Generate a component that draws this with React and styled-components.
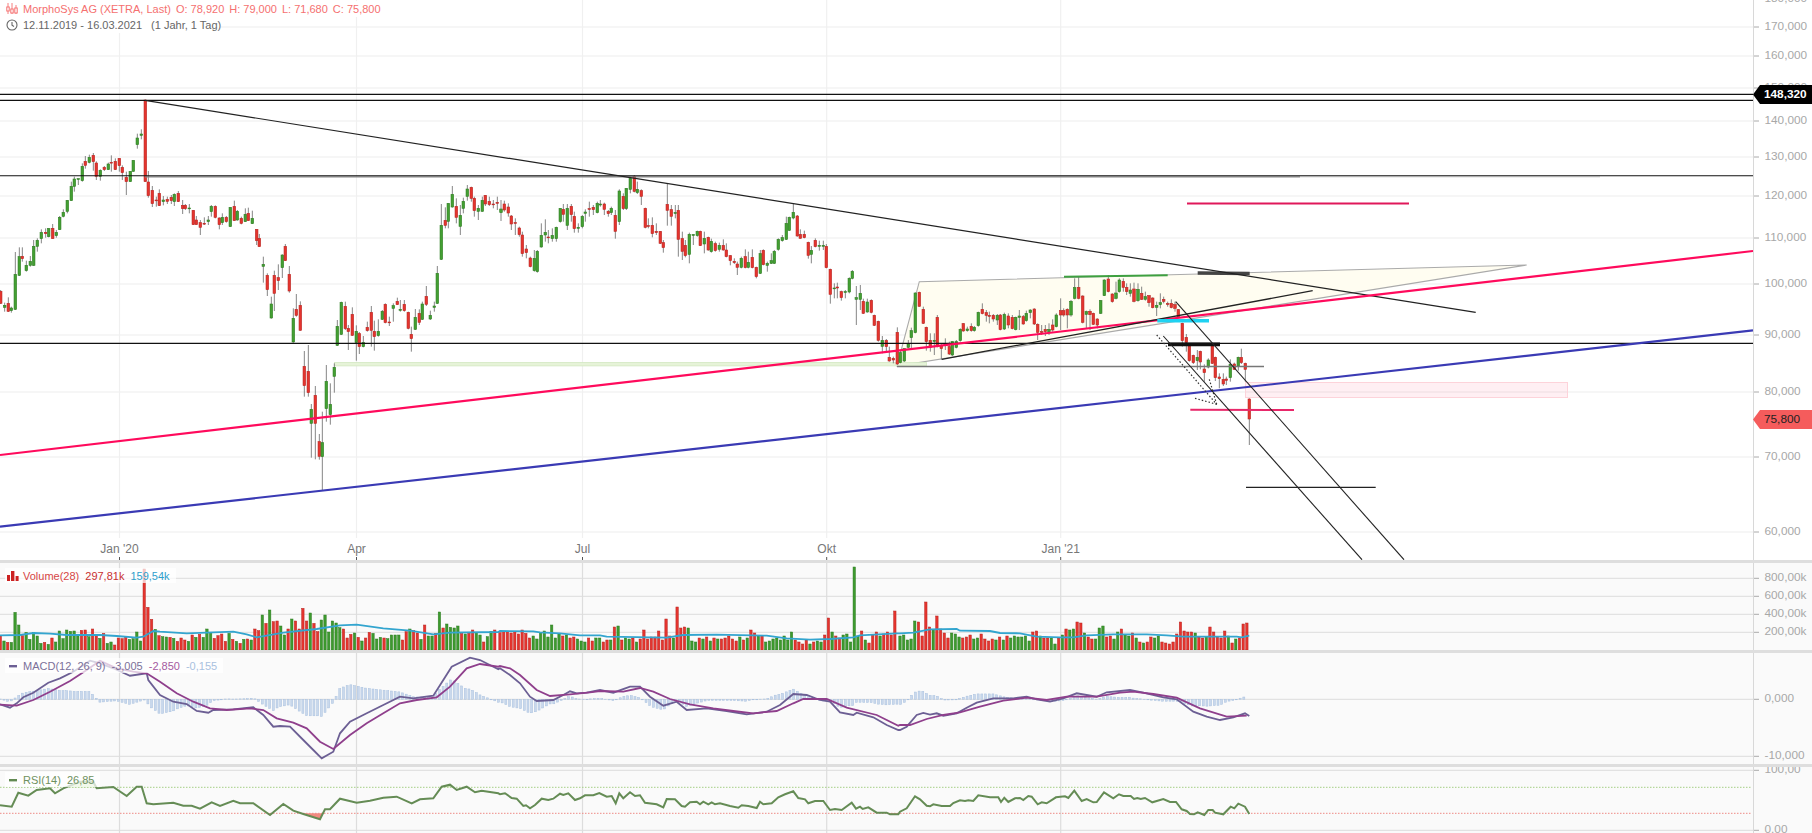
import React from 'react';
import styled, { createGlobalStyle } from 'styled-components';

const GlobalStyle = createGlobalStyle`
  html, body { margin: 0; padding: 0; background: #fff; overflow: hidden; }
  body { font-family: "Liberation Sans", Arial, sans-serif; }
`;

/* START: CSS in JS */

const Page = styled.div`
  width: 1812px;
  height: 833px;
  display: flex;
  flex-direction: column;
`;

const Pane = styled.section`
  position: relative;
  display: flex;
  height: ${(p) => p.$height}px;
  background: ${(p) => p.$bg};
  overflow: hidden;
`;

const Divider = styled.div`
  height: 3px;
  background: #dedede;
`;

const PlotSvg = styled.svg`
  display: block;
  width: 1753px;
  height: 100%;
  flex: none;
  text {
    font-size: 12px;
    fill: #777;
    text-anchor: middle;
  }
`;

const AxisSvg = styled.svg`
  display: block;
  flex: 1;
  height: 100%;
  border-left: 1px solid #d8d8d8;
  text {
    font-size: 11.8px;
    fill: #a8a8a8;
  }
`;

const PriceTag = styled.div`
  position: absolute;
  top: ${(p) => p.$top}px;
  left: 1753px;
  width: 59px;
  height: 19px;
  box-sizing: border-box;
  padding-left: 11px;
  font-size: 11.8px;
  line-height: 18px;
  font-weight: ${(p) => (p.$strong ? 700 : 400)};
  color: ${(p) => p.$fg};
  background: ${(p) => p.$bg};
  clip-path: polygon(0 50%, 7px 0, 100% 0, 100% 100%, 7px 100%);
`;

const TitleBlock = styled.div`
  position: absolute;
  top: 1px;
  left: 0;
  display: flex;
  flex-direction: column;
  align-items: flex-start;
`;

const TitleRow = styled.div`
  display: flex;
  align-items: center;
  height: 16px;
  padding: 0 0 0 6px;
  background: #fff;
  font-size: 11px;
  color: ${(p) => p.$color};
  white-space: nowrap;
  span + span { margin-left: ${(p) => p.$gap}px; }
  svg { margin-right: 5px; flex: none; }
`;

const StudyLegend = styled.div`
  position: absolute;
  top: 5px;
  left: 5px;
  display: flex;
  align-items: center;
  height: 15px;
  padding: 0 6px 0 2px;
  background: rgba(255, 255, 255, 0.72);
  font-size: 11px;
  white-space: nowrap;
  svg { margin-right: 4px; flex: none; }
`;

const LegendValue = styled.span`
  color: ${(p) => p.$color};
  margin-right: 6px;
  &:last-child { margin-right: 0; }
`;

/* END: CSS in JS */

const GREEN = 1;
const RED = 0;

// candles read off the chart: [x, bodyTop, bodyBottom, wickTop, wickBottom, colour], 3x crop units
const rows1 = [
  [2,484,520,480,522,RED],[14,526,532,518,545,GREEN],[25,520,544,502,546,RED],[34,534,542,530,548,GREEN],[46,433,538,366,540,GREEN],
  [58,380,436,352,438,GREEN],[67,379,386,352,395,RED],[79,406,422,392,425,GREEN],[91,394,406,378,410,GREEN],[101,349,406,330,408,GREEN],
  [112,331,349,325,365,GREEN],[124,307,326,298,340,GREEN],[137,307,311,295,323,RED],[146,296,320,294,322,GREEN],[158,295,326,282,326,RED],
  [169,307,317,300,323,GREEN],[179,262,299,258,300,GREEN],[190,247,259,238,262,GREEN],[202,211,244,210,250,GREEN],[214,169,212,155,212,GREEN],
  [223,147,169,140,185,GREEN],[235,146,148,146,165,GREEN],[247,109,152,100,155,GREEN],[256,94,106,78,116,RED],[268,82,97,74,100,GREEN],
  [280,76,95,69,122,RED],[289,99,139,94,150,RED],[301,121,139,118,152,GREEN],[313,112,119,108,123,RED],[325,102,119,98,120,GREEN],
  [334,97,99,76,125,RED],[346,94,119,85,120,RED],[358,85,107,85,125,RED],[367,112,128,106,150,RED],[379,142,155,125,195,RED],
  [391,124,155,124,155,GREEN],[400,91,124,91,125,GREEN],[412,24,44,11,56,GREEN],[424,12,16,-2,28,GREEN],[436,-90,155,-90,155,RED],
  [445,156,197,123,203,RED],[457,181,221,168,231,RED],[469,210,212,200,230,RED],[478,190,227,178,228,RED],[490,210,215,198,226,GREEN],
  [502,208,214,200,222,RED],[514,202,212,195,222,RED],[523,193,215,190,228,GREEN],[535,190,215,183,216,RED],[548,226,236,210,252,RED],
  [556,226,236,222,240,RED],[568,234,236,222,250,GREEN],[580,241,284,240,285,RED],[589,270,284,258,284,RED],[601,278,292,270,315,RED],
  [613,280,282,262,285,RED],[625,270,275,258,285,GREEN],[634,229,245,225,260,GREEN],[646,229,262,226,265,RED],[658,264,284,262,298,RED],
  [667,262,278,250,285,GREEN],[679,262,275,258,278,RED],[691,232,290,232,290,GREEN],[703,229,272,212,272,RED],[712,244,270,240,272,GREEN],
  [724,265,280,260,283,RED],[736,253,275,235,276,GREEN],[745,250,272,233,273,RED],[757,265,281,242,282,GREEN],[770,298,332,298,345,RED],
  [778,325,350,312,350,RED],[790,403,409,380,458,GREEN],[802,436,479,430,498,RED],[814,522,564,500,566,GREEN],[823,436,490,422,543,RED],
  [835,443,452,403,480,RED],[847,375,413,373,444,GREEN],[856,349,392,342,393,RED],[868,433,483,408,488,RED],[880,565,636,535,638,GREEN],
  [889,538,556,492,560,RED],[901,526,601,514,602,RED],[913,709,767,663,800,RED],[925,724,788,645,800,RED],[934,838,880,822,983,GREEN],
  [946,796,880,768,988,RED],[958,935,979,912,989,RED],[967,938,980,845,1080,GREEN],[979,754,836,705,875,GREEN],[991,823,854,760,884,GREEN],
  [1003,712,739,700,788,GREEN],[1012,589,646,570,648,GREEN],[1024,517,613,515,615,GREEN],[1036,529,596,515,600,RED],[1045,595,605,585,660,RED],
  [1057,553,616,532,618,RED],[1069,604,638,586,692,GREEN],[1078,611,650,606,672,RED],[1090,637,650,618,652,GREEN],[1102,592,602,575,605,RED],
  [1114,547,601,528,650,RED],[1123,604,620,572,662,RED],[1135,604,617,568,620,GREEN],[1147,544,568,540,570,GREEN],[1156,523,578,520,580,RED],
  [1168,576,578,560,588,RED],[1180,527,535,520,575,GREEN],[1192,514,524,503,525,RED],[1201,538,541,510,545,GREEN],[1213,523,542,510,545,RED],
  [1225,547,595,545,598,RED],[1234,613,626,590,665,RED],[1246,562,598,537,600,GREEN],[1258,550,577,538,585,RED],[1267,522,568,515,570,GREEN],
  [1279,499,523,468,528,RED],[1291,556,567,542,570,GREEN],[1303,528,532,515,545,GREEN],[1312,430,520,408,522,GREEN],[1324,286,388,222,390,GREEN],
  [1336,271,286,232,295,RED],[1345,220,274,220,295,GREEN],[1357,193,231,168,233,GREEN],[1369,229,262,205,280,RED],[1381,256,289,225,315,GREEN],
  [1390,214,235,203,250,GREEN],[1402,177,199,165,212,GREEN],[1414,172,205,170,215,RED],[1423,205,242,200,260,RED],[1435,235,244,225,270,GREEN],
  [1447,211,244,200,245,GREEN],[1456,196,222,195,228,RED],[1468,214,224,200,228,RED],[1480,222,224,210,235,RED],[1492,217,220,200,240,RED],
];

const rows2 = [
  [3,147,158,120,183,GREEN],[13,132,150,122,155,RED],[25,141,159,130,170,RED],[34,168,192,165,210,RED],[46,188,190,175,225,RED],
  [58,204,224,200,230,RED],[67,225,281,215,290,RED],[79,267,278,255,295,RED],[91,294,320,290,322,RED],[103,295,332,270,335,GREEN],
  [112,274,335,270,338,GREEN],[124,226,261,190,263,GREEN],[136,217,225,178,245,GREEN],[145,231,233,210,250,RED],[157,226,236,205,245,GREEN],
  [169,202,236,200,245,GREEN],[181,145,185,145,188,GREEN],[190,148,163,132,185,RED],[202,145,196,132,210,GREEN],[214,139,164,132,185,RED],
  [223,169,206,155,218,RED],[235,202,205,190,218,GREEN],[247,169,200,165,205,GREEN],[256,156,160,148,185,GREEN],[268,146,148,125,170,RED],
  [280,142,149,135,165,RED],[292,130,158,125,160,GREEN],[301,132,135,120,140,GREEN],[313,132,148,128,165,RED],[325,154,161,150,170,RED],
  [334,145,158,140,165,GREEN],[346,166,214,150,236,RED],[358,93,185,88,195,GREEN],[370,109,146,100,150,RED],[379,85,146,85,150,GREEN],
  [391,55,88,50,100,GREEN],[403,50,94,45,97,RED],[412,88,98,65,102,GREEN],[424,92,109,88,135,RED],[436,145,202,143,205,RED],
  [445,197,199,175,205,RED],[457,196,221,172,232,RED],[469,214,218,190,225,RED],[481,214,250,213,252,RED],[490,248,263,240,278,RED],
  [502,133,151,72,197,RED],[514,149,169,135,197,RED],[526,158,160,135,175,GREEN],[535,151,238,135,290,RED],[547,236,274,215,300,RED],
  [556,256,287,240,292,RED],[568,223,283,218,310,GREEN],[580,224,226,222,255,GREEN],[592,214,227,212,230,GREEN],[601,214,257,212,258,RED],
  [613,235,252,215,280,GREEN],[625,232,270,230,272,RED],[634,244,275,236,278,GREEN],[646,251,272,245,275,RED],[658,256,268,248,275,GREEN],
  [670,256,270,238,272,RED],[679,270,290,250,292,RED],[691,287,302,285,316,RED],[703,304,308,295,312,RED],[712,312,322,305,345,RED],
  [724,295,322,290,325,GREEN],[736,290,323,268,325,RED],[745,307,322,275,325,GREEN],[757,292,323,268,325,RED],[769,322,350,320,355,RED],
  [781,281,340,270,342,GREEN],[790,271,314,268,316,RED],[802,310,316,305,335,GREEN],[814,302,310,280,312,GREEN],[823,274,310,270,312,GREEN],
  [835,238,268,235,272,GREEN],[847,233,242,225,245,GREEN],[859,190,238,170,240,GREEN],[868,172,211,170,213,GREEN],[880,157,174,132,178,GREEN],
  [892,168,228,165,230,RED],[901,223,235,208,236,RED],[913,223,233,212,235,RED],[925,247,286,245,296,RED],[934,271,283,258,310,GREEN],
  [946,241,260,235,262,RED],[958,256,259,242,272,GREEN],[970,256,259,242,270,GREEN],[979,259,323,252,325,RED],[991,328,403,326,431,RED],
  [1003,384,386,370,415,GREEN],[1012,381,384,368,415,RED],[1024,395,413,392,422,RED],[1036,395,397,390,415,GREEN],[1048,355,396,352,400,GREEN],
  [1057,334,355,330,358,GREEN],[1069,413,418,378,495,GREEN],[1081,400,418,375,450,GREEN],[1090,424,460,416,462,RED],[1102,426,456,416,458,GREEN],
  [1114,421,457,418,460,RED],[1123,466,496,464,498,RED],[1135,484,541,482,545,RED],[1147,541,559,528,580,GREEN],[1159,541,560,537,575,RED],
  [1168,592,603,560,605,RED],[1180,595,600,590,610,RED],[1192,517,612,502,615,RED],[1201,578,608,570,610,GREEN],[1213,566,603,565,606,GREEN],
  [1225,552,562,540,565,GREEN],[1234,512,533,503,570,GREEN],[1246,399,518,397,520,GREEN],[1258,397,439,395,440,RED],[1270,448,490,440,492,RED],
  [1279,502,545,500,572,RED],[1291,541,562,520,575,RED],[1303,541,544,520,585,GREEN],[1312,472,558,465,562,RED],[1324,557,566,552,598,RED],
  [1336,553,556,535,570,GREEN],[1348,560,582,545,585,RED],[1357,545,585,543,588,GREEN],[1369,545,562,540,565,GREEN],[1381,508,542,505,545,GREEN],
  [1390,491,513,489,515,RED],[1402,507,512,500,515,GREEN],[1414,499,512,490,515,RED],[1423,502,512,498,515,GREEN],[1435,457,497,455,500,GREEN],
  [1447,448,461,430,463,RED],[1459,458,466,450,485,RED],[1468,466,469,455,490,RED],[1480,466,477,462,485,RED],[1492,466,480,462,495,GREEN],
];

const rows3 = [
  [451,165,209,162,211,RED],[463,163,207,158,210,GREEN],[475,168,195,160,205,RED],[487,172,206,165,208,RED],[497,172,209,170,211,GREEN],
  [508,168,172,150,210,GREEN],[520,170,192,165,194,RED],[529,160,182,152,185,GREEN],[541,150,158,148,175,GREEN],[553,147,192,145,195,RED],
  [563,193,217,190,240,RED],[575,215,217,195,225,RED],[586,208,215,195,228,RED],[597,208,215,190,225,GREEN],[608,195,210,178,215,RED],
  [619,165,200,160,202,GREEN],[632,152,165,115,210,RED],[641,152,165,145,170,RED],[652,148,165,145,205,RED],[663,124,165,120,170,GREEN],
  [674,83,115,55,118,GREEN],[686,82,115,50,118,RED],[698,108,187,106,190,RED],[709,155,163,152,205,GREEN],[720,154,164,148,210,RED],
  [730,160,193,158,195,RED],[742,177,195,175,205,RED],[752,122,160,120,162,GREEN],[763,60,107,58,108,GREEN],[775,57,95,45,97,RED],
  [787,102,125,100,128,RED],[798,99,115,65,118,GREEN],[808,60,95,55,98,GREEN],[820,64,82,55,95,RED],[830,82,95,70,105,RED],
  [841,90,100,70,110,GREEN],[852,87,124,68,127,RED],[864,88,122,70,125,GREEN],[875,100,118,80,120,RED],[886,110,118,95,122,GREEN],
  [897,107,128,105,140,RED],[908,114,143,112,145,RED],[920,136,142,125,168,GREEN],[931,128,134,100,145,GREEN],[941,118,124,110,130,RED],
  [953,131,133,125,140,RED],[964,130,143,118,145,RED],[975,134,145,125,155,RED],[985,149,172,147,175,RED],
];

const rows4 = [
  [247,220,272,218,290,RED],[259,262,278,252,305,RED],[268,288,332,285,335,RED],[280,316,338,314,342,RED],[292,322,332,300,360,GREEN],
  [301,304,336,302,358,RED],[313,357,368,343,395,RED],[325,330,351,325,355,GREEN],[337,288,340,285,342,RED],[346,322,383,320,393,RED],
  [358,381,386,370,415,RED],[370,388,402,370,408,RED],[379,387,391,380,405,RED],[391,343,383,328,395,GREEN],[403,342,358,338,360,RED],
  [415,322,348,320,362,GREEN],[424,322,338,296,342,RED],[436,340,358,338,395,RED],[448,447,507,445,585,RED],
];

const place = (rows, ox, oy) =>
  rows.map(([x, t, b, h, l, c]) => ({ x: ox + x / 3, t: oy + t / 3, b: oy + b / 3, h: oy + h / 3, l: oy + l / 3, c }));

const candles = [
  ...place(rows1, 0, 130),
  ...place(rows2, 500, 160),
  ...place(rows3, 850, 260),
  ...place(rows4, 1100, 250),
];

// bar tops in crop units, negative means a red bar
const volA = [-288,303,-307,307,217,255,-287,277,298,278,288,310,-307,313,-294,306,273,296,270,274,273,287,-271,-270,290,-267,-284,295,-280,310,306,-315,-294,-296,-290,298,296,276,303,-87,-202,-238,268,-287,290,291,-292,295,-304,-294,-300,304,-285,292,-283,292,267,277,-295,-287,-282,-304,280,-298,304,-310,298,-297,300,-267,-272,225,-250,210,-245,-243,258,285,-267,237,-243,-267,-205,-243,219,-250,-275,240,225,276,243,249,263,-267,-294,-283,279,-292,303,-294,-277,280,297,292,-294,296,285,285,285,-300,-275,267,-272,-279,298,-255,288,288,-280,216,-264,252,262,264,258,-280,282,-277,-270,277,285,-306,290,274,-270];
const volB = [-218,-215,-215,-219,-215,-222,-210,-220,-234,228,237,218,213,231,195,234,222,-228,225,-234,-231,237,243,246,-234,-243,234,234,-246,-240,240,-201,198,-240,234,237,-234,246,-237,-210,-237,-231,-231,-213,-240,-177,-228,234,-141,-204,-201,204,243,246,-234,237,-231,243,-234,237,-237,-234,-228,-237,-243,231,-240,234,-210,-219,228,-228,246,243,237,234,240,228,240,216,-240,-246,-252,-240,252,-246,243,246,-225,-174,216,-228,-234,225,222,246,21,228,-213,240,-249,-225,-216,228,-222,-216,-225,-153];
const volC = [228,225,240,237,183,-186,-228,-126,-201,210,-168,-207,-219,-234,219,222,231,-234,-231,-225,237,234,-222,-237,-243,-237,240,-231,240,-228,234,228,231,231,228,243,-216,-213,228,-234,-234,234,252,-234,225,-207,210,207,-186,-189,219,-231,-237,237,204,198,-231,-228,237,216,-207,225,228,-219,234,-246,249,-246,-231,234,228,-246,-249,-252,-246,-222,-186,-213,-216,-216,219,-231,-234,231,-201,-216,-231,-234,-213,228,-249,237,-234,-192,-189];

const STEP = 3.69;
const volBars = [
  ...volA.map((v, i) => ({ x: 0.3 + i * STEP, top: 540 + Math.abs(v) / 3, up: v > 0 })),
  ...volB.map((v, i) => ({ x: 500 + i * STEP, top: 560 + Math.abs(v) / 3, up: v > 0 })),
  ...volC.map((v, i) => ({ x: 900 + i * STEP, top: 560 + Math.abs(v) / 3, up: v > 0 })),
];

const curve = (parts) =>
  parts.flatMap(([ox, oy, pts]) => pts.map(([x, y]) => [ox + x / 3, oy + y / 3]));

const volAvg = curve([
  [0, 540, [[0,286],[60,285],[100,279],[150,281],[200,285],[300,285],[350,288],[410,293],[430,290],[460,273],[480,275],[560,280],[700,275],[740,283],[770,292],[850,278],[950,267],[1020,256],[1070,254],[1150,265],[1230,272],[1300,283],[1350,278],[1495,276]]],
  [500, 560, [[0,213],[100,214],[120,217],[180,220],[240,226],[300,226],[320,230],[500,233],[550,225],[650,224],[800,227],[860,235],[930,239],[990,237],[1060,232],[1080,226],[1190,220]]],
  [900, 560, [[0,220],[40,218],[90,208],[170,207],[180,212],[270,213],[300,219],[360,220],[410,230],[480,232],[520,232],[560,226],[640,223],[740,223],[800,226],[850,230],[1010,230],[1025,232],[1048,227]]],
]);

const macdLine = curve([
  [0, 540, [[0,493],[30,503],[50,490],[70,472],[100,458],[145,428],[180,415],[220,395],[270,362],[300,370],[340,385],[390,407],[440,400],[445,420],[480,465],[520,485],[560,492],[590,513],[625,518],[640,510],[700,508],[760,502],[790,525],[820,560],[840,558],[870,560],[910,600],[940,630],[965,655],[1000,635],[1020,580],[1050,545],[1100,520],[1150,495],[1200,470],[1240,475],[1300,467],[1330,420],[1355,380],[1410,353],[1440,360],[1495,388]]],
  [500, 560, [[0,325],[30,345],[60,370],[90,410],[110,423],[160,420],[190,405],[210,394],[230,400],[260,398],[300,390],[340,398],[390,380],[420,380],[450,410],[490,437],[530,425],[560,450],[620,445],[680,453],[740,463],[800,455],[840,435],[880,402],[920,405],[960,420],[990,425],[1020,457],[1060,465],[1070,458],[1120,472],[1160,495],[1195,510]]],
  [900, 560, [[0,510],[20,500],[50,465],[70,459],[90,464],[110,460],[130,467],[170,460],[200,443],[230,428],[280,415],[340,415],[380,410],[410,418],[450,425],[490,415],[530,400],[590,410],[620,397],[690,390],[730,398],[790,412],[830,418],[880,455],[920,470],[960,480],[1000,472],[1035,460],[1048,468]]],
]);

const signalLine = curve([
  [0, 540, [[0,494],[50,497],[100,480],[150,455],[210,423],[260,390],[300,362],[350,385],[400,395],[440,400],[480,425],[530,460],[580,485],[630,505],[680,510],[750,505],[790,510],[830,535],[880,548],[920,565],[960,605],[1000,627],[1050,585],[1100,550],[1150,520],[1200,490],[1250,480],[1310,472],[1350,440],[1400,385],[1440,372],[1495,380]]],
  [500, 560, [[0,318],[30,325],[60,345],[110,390],[150,408],[210,403],[270,397],[300,393],[370,395],[420,384],[460,395],[510,417],[570,433],[640,445],[700,453],[760,460],[830,453],[880,430],[910,417],[980,417],[1040,443],[1130,465],[1195,497]]],
  [900, 560, [[0,495],[30,495],[80,477],[130,465],[180,457],[240,440],[310,422],[380,413],[440,420],[500,410],[590,410],[660,398],[700,395],[760,402],[830,413],[900,445],[980,470],[1040,467]]],
]);

const rsiLine = curve([
  [0, 540, [[0,796],[35,800],[55,758],[85,767],[110,750],[150,745],[165,760],[190,745],[240,725],[280,725],[290,745],[340,741],[380,768],[410,740],[425,740],[440,790],[460,793],[520,788],[550,797],[575,797],[600,806],[635,787],[660,798],[700,782],[720,790],[760,790],[810,825],[850,792],[880,812],[910,822],[960,838],[975,808],[990,808],[1020,776],[1070,788],[1110,782],[1150,773],[1190,770],[1235,790],[1260,778],[1300,775],[1325,740],[1350,734],[1370,750],[1400,740],[1425,757],[1445,752],[1495,760]]],
  [500, 560, [[0,703],[15,700],[35,714],[50,716],[70,738],[78,736],[90,745],[105,735],[125,716],[145,720],[160,716],[180,701],[190,705],[205,700],[225,720],[240,715],[255,706],[280,706],[298,699],[320,710],[335,708],[347,730],[358,700],[370,715],[390,697],[405,708],[420,706],[435,728],[470,733],[490,742],[500,717],[525,718],[545,738],[555,740],[570,727],[590,725],[600,733],[610,725],[625,733],[635,727],[645,733],[660,730],[690,738],[715,743],[725,736],[745,738],[770,744],[780,725],[790,733],[815,730],[835,712],[855,703],[880,694],[895,714],[915,718],[925,730],[945,723],[970,723],[990,750],[1005,747],[1025,750],[1055,728],[1068,746],[1080,740],[1088,747],[1105,742],[1130,758],[1160,758],[1170,763],[1195,763]]],
  [900, 560, [[0,755],[20,745],[45,709],[60,718],[80,737],[90,739],[100,733],[125,738],[150,738],[160,729],[180,721],[195,723],[205,721],[220,723],[235,706],[270,712],[295,712],[303,726],[313,713],[325,726],[345,715],[360,714],[370,720],[385,708],[395,710],[413,733],[425,727],[440,730],[468,712],[495,709],[505,714],[523,692],[545,723],[560,717],[580,727],[590,726],[612,697],[640,715],[657,703],[670,708],[692,708],[702,717],[712,714],[722,717],[735,714],[757,727],[790,717],[810,726],[828,726],[845,748],[860,753],[870,762],[882,763],[893,757],[913,765],[925,750],[938,750],[945,758],[970,763],[992,740],[1003,745],[1015,731],[1035,740],[1048,762]]],
]);

const at = (pts, x) => {
  for (let i = 1; i < pts.length; i++) {
    if (x <= pts[i][0]) {
      const [x0, y0] = pts[i - 1];
      const [x1, y1] = pts[i];
      return y0 + ((y1 - y0) * (x - x0)) / (x1 - x0 || 1);
    }
  }
  return pts[pts.length - 1][1];
};

const histBars = Array.from({ length: 338 }, (_, i) => {
  const x = 0.3 + i * STEP;
  return { x, h: (at(signalLine, x) - at(macdLine, x)) * 1.1 };
});

const toPoints = (pts) => pts.map(([x, y]) => `${x.toFixed(1)},${y.toFixed(1)}`).join(' ');

const dateTicks = [
  { x: 119.5, label: "Jan '20" },
  { x: 356.5, label: 'Apr' },
  { x: 582.5, label: 'Jul' },
  { x: 826.7, label: 'Okt' },
  { x: 1060.7, label: "Jan '21" },
];

const priceTicks = [
  [-1.4, '180,000'], [27, '170,000'], [56, '160,000'], [88, '150,000'], [121, '140,000'], [157, '130,000'],
  [196, '120,000'], [238, '110,000'], [284, '100,000'], [335, '90,000'], [392, '80,000'], [457, '70,000'], [532, '60,000'],
];

// [x1, y1, x2, y2, colour, width, dash]
const drawings = [
  [1197.7, 273, 1249.7, 273.5, '#444', 3.5],
  [0, 94.4, 1753, 94.4, '#111', 1.1],
  [0, 100.4, 1753, 100.4, '#111', 1.1],
  [145, 176.8, 1300, 176.8, '#888', 1.2],
  [1300, 176.8, 1600, 176.8, '#ddd', 1.2],
  [0, 175.8, 1753, 175.8, '#111', 1.1],
  [145, 100.4, 1475.7, 312.3, '#222', 1.2],
  [0, 343.4, 1753, 343.4, '#111', 1.2],
  [897, 366.4, 1264, 366.4, '#777', 1.5],
  [0, 455, 1753, 251, '#ff0a5c', 2.2],
  [0, 526.7, 1753, 330.4, '#3a3ab4', 2.2],
  [941.7, 359.3, 1312.7, 290.7, '#222', 1.3],
  [1064, 276.7, 1167.7, 275.3, '#3ea040', 2],
  [1157.3, 320.7, 1209, 320.7, '#1fd2f2', 3.4],
  [1168, 344.4, 1220, 344.4, '#111', 3.6],
  [1187, 203.6, 1409, 203.6, '#e0185a', 2],
  [1190.3, 409.8, 1294, 410, '#e8286a', 2],
  [1246, 487.4, 1375.7, 487.4, '#222', 1.2],
  [1175.7, 301.7, 1404, 559.7, '#222', 1.1],
  [1163.3, 336, 1362, 559.7, '#222', 1.1],
  [1156.7, 335, 1216.7, 404.3, '#333', 1.2, '1.5 2'],
  [1195, 398.3, 1216.7, 404.3, '#333', 1.2, '1.5 2'],
  [1209.3, 379.3, 1216.7, 404.3, '#333', 1.2, '1.5 2'],
];

const VerticalGrid = ({ y1, y2, color }) =>
  dateTicks.map((t) => <line key={t.x} x1={t.x} x2={t.x} y1={y1} y2={y2} stroke={color} strokeWidth="1.2" />);

const HorizontalGrid = ({ ys, color, width }) =>
  ys.map((y) => <line key={y} x1="0" x2="1753" y1={y} y2={y} stroke={color} strokeWidth={width} />);

const Axis = ({ top, height, ticks }) => (
  <AxisSvg viewBox={`0 ${top} 58 ${height}`} preserveAspectRatio="none">
    {ticks.map(([y, label]) => (
      <g key={label}>
        <line x1="0" x2="5" y1={y} y2={y} stroke="#aaa" />
        <text x="10.5" y={y + 3}>{label}</text>
      </g>
    ))}
  </AxisSvg>
);

const CandleIcon = () => (
  <svg width="12" height="12" viewBox="0 0 12 12" fill="none" stroke="#f57070">
    <path d="M2 0v11M6 0v11M10 2v9" strokeWidth="0.9" />
    <rect x="0.8" y="4" width="2.4" height="4" fill="#fff" />
    <rect x="4.8" y="6" width="2.4" height="4" fill="#fff" />
    <rect x="8.8" y="5" width="2.4" height="5" fill="#fff" />
  </svg>
);

const ClockIcon = () => (
  <svg width="12" height="12" viewBox="0 0 12 12" fill="none" stroke="#666" strokeWidth="1.1">
    <circle cx="6" cy="6" r="5" />
    <path d="M6 3v3.2l2 1.3" />
  </svg>
);

const VolumeIcon = () => (
  <svg width="12" height="10" viewBox="0 0 12 10" fill="#c22">
    <rect x="0" y="4" width="3" height="6" />
    <rect x="4" y="0" width="3.4" height="10" />
    <rect x="8.6" y="5" width="3" height="5" />
  </svg>
);

const DashIcon = ({ color }) => (
  <svg width="12" height="10" viewBox="0 0 12 10">
    <rect x="2" y="4" width="8" height="2.4" fill={color} />
  </svg>
);

const MainPane = () => (
  <Pane $height={560} $bg="#fff">
    <PlotSvg viewBox="0 0 1753 560" preserveAspectRatio="none">
      <HorizontalGrid ys={priceTicks.map((t) => t[0])} color="#eeeeee" width={1.2} />
      <VerticalGrid y1={0} y2={538} color="#f0f0f0" />
      <polygon points="897,366 919.3,281.7 1526.7,265" fill="#fffdf1" stroke="#aaa" strokeWidth="1.1" />
      <rect x="334.5" y="362.5" width="592" height="3.4" fill="#e6f3d8" stroke="#d3e8c2" strokeWidth="0.8" />
      {candles.map((k) => (
        <g key={k.x}>
          <line x1={k.x} x2={k.x} y1={k.h} y2={k.l} stroke="#777" strokeWidth="0.9" />
          <rect
            x={k.x - 1.3}
            y={k.t}
            width="2.6"
            height={Math.max(k.b - k.t, 0.8)}
            fill={k.c ? '#43a032' : '#e5342e'}
            stroke={k.c ? '#2f7d23' : '#b92723'}
            strokeWidth="0.6"
          />
        </g>
      ))}
      <rect x="1245.5" y="382.5" width="322" height="15" fill="rgba(255,30,90,0.07)" stroke="#fdd3da" />
      {drawings.map(([x1, y1, x2, y2, c, w, dash]) => (
        <line key={`${x1}-${y1}-${x2}`} x1={x1} y1={y1} x2={x2} y2={y2} stroke={c} strokeWidth={w} strokeDasharray={dash} />
      ))}
      {dateTicks.map((t) => (
        <g key={t.label}>
          <text x={t.x} y="553">{t.label}</text>
          <line x1={t.x} x2={t.x} y1="557" y2="560" stroke="#555" />
        </g>
      ))}
    </PlotSvg>
    <Axis top={0} height={560} ticks={priceTicks} />
    <PriceTag $top={85} $bg="#000" $fg="#fff" $strong>148,320</PriceTag>
    <PriceTag $top={410} $bg="#f55c5c" $fg="#222">75,800</PriceTag>
    <TitleBlock>
      <TitleRow $color="#f57070" $gap={5}>
        <CandleIcon />
        <span>MorphoSys AG (XETRA, Last)</span>
        <span>O: 78,920</span>
        <span>H: 79,000</span>
        <span>L: 71,680</span>
        <span>C: 75,800</span>
      </TitleRow>
      <TitleRow $color="#666" $gap={9}>
        <ClockIcon />
        <span>12.11.2019 - 16.03.2021</span>
        <span>(1 Jahr, 1 Tag)</span>
      </TitleRow>
    </TitleBlock>
  </Pane>
);

const VolumePane = () => (
  <Pane $height={87} $bg="#fafafa">
    <PlotSvg viewBox="0 563 1753 87" preserveAspectRatio="none">
      <HorizontalGrid ys={[578.3, 596.3, 614.3, 632.3]} color="#dddddd" width={1} />
      <VerticalGrid y1={563} y2={650} color="#dddddd" />
      {volBars.map((b) => (
        <rect
          key={b.x}
          x={b.x - 1.2}
          y={b.top}
          width="2.4"
          height={650 - b.top}
          fill={b.up ? '#3d9a2e' : '#e5342e'}
          stroke={b.up ? '#2f7d23' : '#b92723'}
          strokeWidth="0.5"
        />
      ))}
      <polyline points={toPoints(volAvg)} fill="none" stroke="#33a5cf" strokeWidth="1.8" />
    </PlotSvg>
    <Axis top={563} height={87} ticks={[[578.3, '800,00k'], [596.3, '600,00k'], [614.3, '400,00k'], [632.3, '200,00k']]} />
    <StudyLegend>
      <VolumeIcon />
      <LegendValue $color="#d64545">Volume(28)</LegendValue>
      <LegendValue $color="#c83030">297,81k</LegendValue>
      <LegendValue $color="#2f9fcc">159,54k</LegendValue>
    </StudyLegend>
  </Pane>
);

const MacdPane = () => (
  <Pane $height={111} $bg="#fafafa">
    <PlotSvg viewBox="0 653 1753 111" preserveAspectRatio="none">
      <HorizontalGrid ys={[699.3, 756.3]} color="#dddddd" width={1} />
      <VerticalGrid y1={653} y2={764} color="#dddddd" />
      {histBars.map((b) => (
        <rect
          key={b.x}
          x={b.x - 1}
          y={b.h > 0 ? 699.3 - b.h : 699.3}
          width="2"
          height={Math.max(Math.abs(b.h), 0.5)}
          fill="#c9d8ec"
          stroke="#a9c1df"
          strokeWidth="0.5"
        />
      ))}
      <polyline points={toPoints(macdLine)} fill="none" stroke="#6c5f94" strokeWidth="1.8" />
      <polyline points={toPoints(signalLine)} fill="none" stroke="#8f3f8c" strokeWidth="1.8" />
    </PlotSvg>
    <Axis top={653} height={111} ticks={[[699.3, '0,000'], [756.3, '-10,000']]} />
    <StudyLegend>
      <DashIcon color="#6c5f94" />
      <LegendValue $color="#7b7099">MACD(12, 26, 9)</LegendValue>
      <LegendValue $color="#7b7099">-3,005</LegendValue>
      <LegendValue $color="#a55aa0">-2,850</LegendValue>
      <LegendValue $color="#a9c1df">-0,155</LegendValue>
    </StudyLegend>
  </Pane>
);

const RsiPane = () => {
  const area = `0,800 ${toPoints(rsiLine)} 1249,800`;
  return (
    <Pane $height={66} $bg="#fafafa">
      <PlotSvg viewBox="0 767 1753 66" preserveAspectRatio="none">
        <defs>
          <clipPath id="rsiHigh"><rect x="0" y="767" width="1753" height="20.3" /></clipPath>
          <clipPath id="rsiLow"><rect x="0" y="813.3" width="1753" height="20" /></clipPath>
        </defs>
        <HorizontalGrid ys={[770.3, 830.3]} color="#dddddd" width={1} />
        <VerticalGrid y1={767} y2={833} color="#dddddd" />
        <polygon points={area} fill="#cfe8b8" clipPath="url(#rsiHigh)" />
        <polygon points={area} fill="#f28a80" clipPath="url(#rsiLow)" />
        <line x1="0" x2="1752" y1="787.3" y2="787.3" stroke="#a5cf85" strokeDasharray="1.5 1.5" />
        <line x1="0" x2="1752" y1="813.3" y2="813.3" stroke="#ee8a85" strokeDasharray="1.5 1.5" />
        <polyline points={toPoints(rsiLine)} fill="none" stroke="#658c55" strokeWidth="2" />
      </PlotSvg>
      <Axis top={767} height={66} ticks={[[770.3, '100,00'], [830.3, '0,00']]} />
      <StudyLegend>
        <DashIcon color="#628a52" />
        <LegendValue $color="#6f9160">RSI(14)</LegendValue>
        <LegendValue $color="#6f9160">26,85</LegendValue>
      </StudyLegend>
    </Pane>
  );
};

export default function App() {
  return (
    <Page>
      <GlobalStyle />
      <MainPane />
      <Divider />
      <VolumePane />
      <Divider />
      <MacdPane />
      <Divider />
      <RsiPane />
    </Page>
  );
}
